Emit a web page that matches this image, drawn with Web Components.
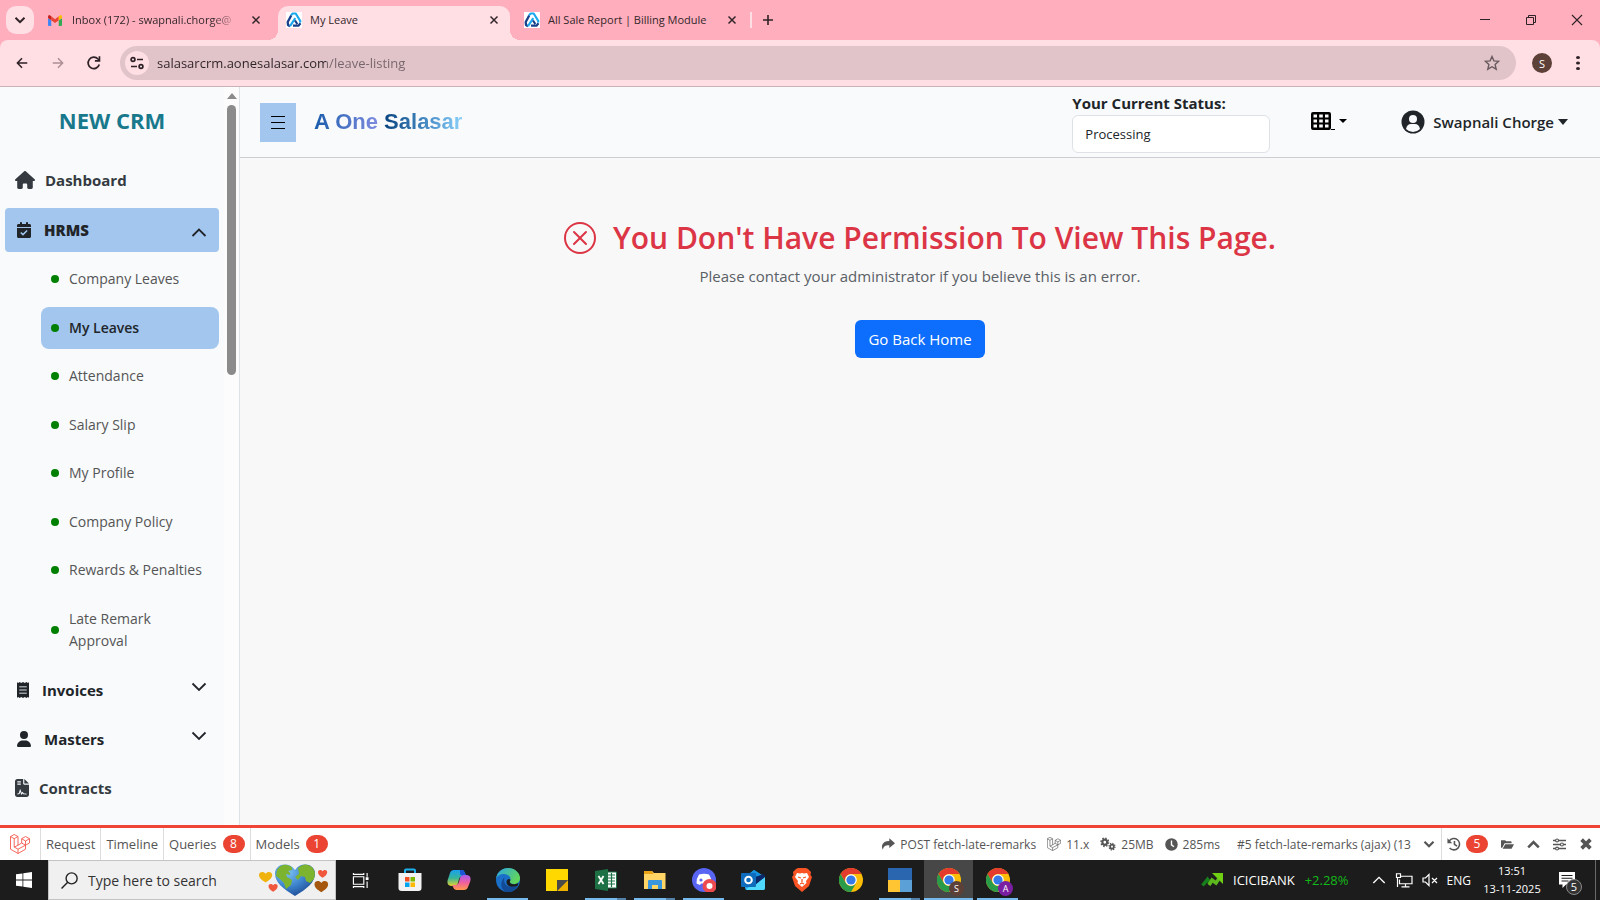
<!DOCTYPE html>
<html lang="en">
<head>
<meta charset="utf-8">
<title>My Leave</title>
<style>
html,body{height:100%}
body{margin:0;font-family:"Open Sans","Noto Sans",sans-serif;color:#212529;background:#f8f8f8;overflow:hidden}
</style>
</head>
<body>
<desk-top></desk-top>
<script>
const ICONS={
down:['0 0 16 16','<path d="M3.5 5.8 8 10.2l4.5-4.4" fill="none" stroke="currentColor" stroke-width="2"/>'],
gmail:['0 0 28 21','<path d="M0 6v13q0 2 2 2h4.500V10z" fill="#4285f4"/><path d="M28 6v13q0 2-2 2h-4.500V10z" fill="#34a853"/><path d="M6.500 2.500 14 8l7.500-5.500V10L14 15.500 6.500 10z" fill="#ea4335"/><path d="M0 3q0-3 3-3l3.500 2.500V10L0 5.500z" fill="#c5221f"/><path d="M28 3q0-3-3-3l-3.500 2.500V10L28 5.500z" fill="#fbbc04"/>'],
close:['0 0 16 16','<path d="m4 4 8 8m0-8-8 8" stroke="currentColor" stroke-width="1.700"/>'],
aone:['0 0 16 16','<path fill="#fff" d="M0 0h16v16H0z"/><path d="M5 3.200 6.700 1.500h3L14.300 9l-.3 1.500" fill="none" stroke="#1ba8ee" stroke-width="2.200" stroke-linejoin="round"/><path d="M5.200 3.500 1.700 10l.3 3 2 1.300" fill="none" stroke="#173f8a" stroke-width="2.300" stroke-linejoin="round"/><path d="M4 14.200 9.300 6.200" stroke="#1ba8ee" stroke-width="2.200"/><path d="m9 8.500 2.300 3.500M7 13.700h5.500l2-2.500" fill="none" stroke="#173f8a" stroke-width="2.200"/>'],
plus:['0 0 16 16','<path d="M8 3v10M3 8h10" stroke="currentColor" stroke-width="1.600"/>'],
min:['0 0 16 16','<path d="M3 7.500h10" stroke="currentColor"/>'],
restore:['0 0 16 16','<path d="M3.500 5.500h7v7h-7zM5.500 5.500v-2h7v7h-2" fill="none" stroke="currentColor"/>'],
wclose:['0 0 16 16','<path d="m3 3 10 10m0-10L3 13" stroke="currentColor" stroke-width="1.100"/>'],
back:['0 0 16 16','<path d="M14 8H3m5-5.500L2.700 8 8 13.500" fill="none" stroke="currentColor" stroke-width="1.700"/>'],
fwd:['0 0 16 16','<path d="M2 8h11M8 2.500 13.300 8 8 13.500" fill="none" stroke="currentColor" stroke-width="1.700"/>'],
reload:['0 0 16 16','<path d="M13.300 9.500A5.700 5.700 0 1 1 12 4L13.500 5.500" fill="none" stroke="currentColor" stroke-width="1.700"/><path d="M14.300 1.300v5.400H8.900V5h3.700V1.300z" fill="currentColor"/>'],
tune:['0 0 16 16','<g fill="none" stroke="currentColor" stroke-width="1.700"><circle cx="4" cy="4.500" r="1.900"/><path d="M8 4.500h6M2 11.500h6"/><circle cx="12" cy="11.500" r="1.900"/></g>'],
star:['0 0 16 16','<path d="m8 1.500 1.900 4.400 4.800.4-3.600 3.200 1.100 4.700L8 11.700l-4.200 2.500 1.100-4.700L1.300 6.300l4.800-.4z" fill="none" stroke="currentColor" stroke-width="1.400"/>'],
dots:['0 0 16 16','<g fill="currentColor"><circle cx="8" cy="2.500" r="1.600"/><circle cx="8" cy="8" r="1.600"/><circle cx="8" cy="13.500" r="1.600"/></g>'],
burger:['0 0 14 14','<path d="M0 1.500h14M0 7.500h14M0 13.500h14" stroke="currentColor"/>'],
table:['0 0 20 18','<path fill-rule="evenodd" d="M2 0h16q2 0 2 2v14q0 2-2 2H2q-2 0-2-2V2Q0 0 2 0zM2.500 2.500v3h3.500v-3zm5.700 0v3h3.600v-3zm5.800 0v3h3.500v-3zM2.500 7.500v3h3.500v-3zm5.700 0v3h3.600v-3zm5.800 0v3h3.500v-3zM2.500 12.500v3h3.500v-3zm5.700 0v3h3.600v-3zm5.800 0v3h3.500v-3z" fill="currentColor"/>'],
caret:['0 0 8 4','<path d="M0 0h8L4 4z" fill="currentColor"/>'],
user:['0 0 24 24','<circle cx="12" cy="12" r="11.500" fill="currentColor"/><circle cx="12" cy="9" r="4" fill="#f8fafc"/><path d="M5 19q1-5 5-5h4q4 0 5 5-3 3-7 3t-7-3z" fill="#f8fafc"/>'],
home:['0 0 576 512','<path fill="currentColor" d="M575.8 255.5c0 18-15 32.1-32 32.1h-32l.7 160.2c0 2.700-.2 5.400-.5 8.100V472c0 22.100-17.900 40-40 40H392c-22.100 0-40-17.900-40-40V384c0-17.700-14.300-32-32-32H256c-17.700 0-32 14.300-32 32v88c0 22.100-17.900 40-40 40H104c-22.100 0-40-17.900-40-40V287.600H32c-18 0-32-14-32-32.100 0-9 3-17 10-24L266.400 8c7-7 15-8 22-8s15 2 21 7L564.800 231.500c8 7 12 15 11 24z"/>'],
calendar:['0 0 448 512','<path fill="currentColor" fill-rule="evenodd" d="M128 0c18 0 32 14 32 32v32h128V32c0-18 14-32 32-32s32 14 32 32v32h48c27 0 48 21 48 48v48H0v-48c0-27 21-48 48-48h48V32c0-18 14-32 32-32zM0 192h448v272c0 27-21 48-48 48H48c-27 0-48-21-48-48zm340 98-34-34-114 114-54-54-34 34 88 88z"/>'],
receipt:['0 0 384 512','<path fill="currentColor" d="M0 8 40 30 80 0l56 34L192 0l56 34L304 0l40 30 40-22v496l-40-22-40 30-56-34-56 34-56-34-56 34-40-30-40 22z"/><path d="M72 152h240M72 256h240M72 360h240" stroke="#9aa0a6" stroke-width="48"/>'],
person:['0 0 448 512','<path fill="currentColor" d="M224 256A128 128 0 1 0 224 0a128 128 0 1 0 0 256zm-45.700 48C79.800 304 0 383.800 0 482.300 0 498.700 13.300 512 29.700 512H418.300c16.400 0 29.700-13.300 29.700-29.700C448 383.800 368.200 304 269.700 304z"/>'],
contract:['0 0 384 512','<path fill="currentColor" fill-rule="evenodd" d="M64 0C29 0 0 29 0 64v384c0 35 29 64 64 64h256c35 0 64-29 64-64V160H256c-18 0-32-14-32-32V0zm192 0v128h128zM64 64h96v32H64zm0 64h96v32H64z"/><path d="m64 430 50-16 28-90 36 100 30-38 24 36 88 8" fill="none" stroke="#f8fafc" stroke-width="28"/>'],
chevd:['0 0 16 16','<path d="m1.500 1.500 6.500 6.500 6.500-6.500" fill="none" stroke="currentColor" stroke-width="1.800"/>'],
chevu:['0 0 16 16','<path d="m1.500 14 6.500-6.500 6.500 6.500" fill="none" stroke="currentColor" stroke-width="1.800"/>'],
chevtray:['0 0 16 16','<path d="m1.500 11.500 6.500-6.500 6.500 6.500" fill="none" stroke="currentColor" stroke-width="1.600"/>'],
xcircle:['0 0 16 16','<path fill="currentColor" d="M8 15A7 7 0 1 1 8 1a7 7 0 0 1 0 14m0 1A8 8 0 1 0 8 0a8 8 0 0 0 0 16"/><path fill="currentColor" d="M4.646 4.646a.5.5 0 0 1 .708 0L8 7.293l2.646-2.647a.5.5 0 0 1 .708.708L8.707 8l2.647 2.646a.5.5 0 0 1-.708.708L8 8.707l-2.646 2.647a.5.5 0 0 1-.708-.708L7.293 8 4.646 5.354a.5.5 0 0 1 0-.708"/>'],
laravel:['0 0 20 20','<g fill="none" stroke="currentColor" stroke-width=".9" stroke-linejoin="round"><path d="m.5 2.500 3.700-2 3.800 2-3.800 2.200zM.5 2.500v12.700L8 19.500v-4.300l-3.800-2.200V4.700M8 2.500v8.700l-3.800 2M8 11.200l3.700-2.200V4.700l3.800-2.200 4 2.200-4 2.300-3.800-2.300M15.500 7v4.200l4-2.200V4.700M11.700 9l3.800 2.200v4L8 19.500M8 15.200l7.500-4"/></g>'],
share:['0 0 16 16','<path fill="currentColor" d="M9.500 1.500 16 7l-6.500 5.500V9.300C5 9.200 3 10 2.200 14.500.2 12 .2 4.800 9.500 4.700z"/>'],
cogs:['0 0 20 16','<g fill="none" stroke="currentColor"><circle cx="6" cy="6" r="3" stroke-width="2.600"/><circle cx="6" cy="6" r="4.700" stroke-width="1.800" stroke-dasharray="1.850 1.840"/><circle cx="15" cy="11" r="2.300" stroke-width="2.200"/><circle cx="15" cy="11" r="3.800" stroke-width="1.400" stroke-dasharray="1.500 1.480"/></g>'],
clock:['0 0 16 16','<circle cx="8" cy="8" r="7.700" fill="currentColor"/><path d="M8 3v5.500l3 2.200" fill="none" stroke="#fff" stroke-width="1.700"/>'],
bold:['0 0 16 16','<path d="m2 5 6 6 6-6" fill="none" stroke="currentColor" stroke-width="3"/>'],
boldup:['0 0 16 16','<path d="m1.500 11.500 6.500-6.500 6.500 6.500" fill="none" stroke="currentColor" stroke-width="3.200"/>'],
history:['0 0 16 16','<path d="M2.500 4.500A6.500 6.500 0 1 1 3 12.500M8.500 4.500v4l3 2" fill="none" stroke="currentColor" stroke-width="1.800"/><path d="M.5 1.500V7H6z" fill="currentColor"/>'],
folderopen:['0 0 16 14','<path fill="currentColor" d="M0 1.500h5L6.500 3H12q1 0 1 1v1.500H4.500L1.500 11H0zM5.200 6.700H16L13 12.500H2z"/>'],
sliders:['0 0 16 16','<path d="M0 3h16M0 8h16M0 13h16" stroke="currentColor" stroke-width="1.700"/><g fill="#fff" stroke="currentColor" stroke-width="1.400"><circle cx="5" cy="3" r="1.800"/><circle cx="11" cy="8" r="1.800"/><circle cx="5" cy="13" r="1.800"/></g>'],
heavyx:['0 0 16 16','<path d="m3 3 10 10m0-10L3 13" stroke="currentColor" stroke-width="4.200"/>'],
win:['0 0 16 16','<path fill="#fff" d="m0 2.300 6.500-.9v6.200H0zM7.300 1.300 16 0v7.600H7.300zM0 8.400h6.500v6.200L0 13.700zM7.300 8.400H16V16l-8.700-1.200z"/>'],
search:['0 0 16 16','<circle cx="10" cy="6" r="5.200" fill="none" stroke="currentColor" stroke-width="1.300"/><path d="M6.300 9.700.5 15.500" stroke="currentColor" stroke-width="1.400"/>'],
hearts:['0 0 70 34','<defs><radialGradient id="b" cx=".3" cy=".25" r=".9"><stop offset="0" stop-color="#7fc4f5"/><stop offset=".5" stop-color="#3d83cd"/><stop offset="1" stop-color="#163d86"/></radialGradient><path id="h" d="M20 35C8 27 0 20 0 10 0-1 14-4 20 6 26-4 40-1 40 10 40 20 32 27 20 35z"/></defs><use href="#h" fill="url(#b)" transform="translate(16 1.500) scale(1 .9)"/><path d="M18 7q4-6 10-5 6 1 5 5l-4 1q3 2 2 4l-4-1 1 3 5 3-1 5-5 4-2-6-4-4-4-3zM39 5q5-5 10-3 5 1 7 8l-1 6-4 4-4-2-1-4-4-1-3 4-3-3 4-3z" fill="#7cb32f"/><use href="#h" fill="#efb20e" transform="translate(0 9) scale(.33 .3)"/><use href="#h" fill="#f0583e" transform="translate(9.500 21) scale(.23 .22)"/><use href="#h" fill="#f0583e" transform="translate(59 7) scale(.23 .22)"/><use href="#h" fill="#a5560f" transform="translate(55.500 18) scale(.34 .32)"/>'],
taskview:['0 0 18 18','<path d="M1.500 5v8h11V5zM1.500 1v1.500h11V1M1.500 17v-1.500h11V17M16 1v4m0 5v7" fill="none" stroke="#fff" stroke-width="1.200"/><path d="M14.500 5.500h3v3h-3z" fill="#fff"/>'],
store:['0 0 24 24','<path d="M7 6V2.500q0-1 1-1h8q1 0 1 1V6" fill="none" stroke="#1db2ee" stroke-width="2"/><path d="M.5 5h23v15q0 3-3 3h-17q-3 0-3-3z" fill="#f2f2f2"/><path fill="#f25022" d="M7 9h4.500v4.500H7z"/><path fill="#7fba00" d="M12.500 9H17v4.500h-4.500z"/><path fill="#00a4ef" d="M7 14.500h4.500V19H7z"/><path fill="#ffb900" d="M12.500 14.500H17V19h-4.500z"/>'],
copilot:['0 0 24 24','<defs><linearGradient id="c1" x2="0" y2="1"><stop stop-color="#1aa0f0"/><stop offset=".5" stop-color="#36b59b"/><stop offset="1" stop-color="#e5d32d"/></linearGradient><linearGradient id="c2" x2="0" y2="1"><stop stop-color="#a85bf0"/><stop offset=".5" stop-color="#ee5fa0"/><stop offset="1" stop-color="#ff9a4a"/></linearGradient></defs><path d="M7 2h8q2 0 3 3l1 3h-3q-3 0-4 3l-1 4q-1 3-4 3H4q-5-1-3-7l2-6q1-3 4-3z" fill="url(#c1)"/><path d="M13 2h2q2 0 3 3l1 3h-3q-2 0-3-2z" fill="#1d55d8"/><path d="M17 22H9q-2 0-3-3l-1-2h3q3 0 4-3l1-4q1-3 4-3h3q5 1 3 7l-2 5q-1 3-4 3z" fill="url(#c2)"/>'],
edge:['0 0 24 24','<defs><linearGradient id="e" x2="1" y2=".5"><stop stop-color="#2aa6e8"/><stop offset="1" stop-color="#62d65a"/></linearGradient></defs><circle cx="12" cy="12" r="12" fill="#1a6fc8"/><path d="M0 11C1 4 6 0 12 0c7 0 12 5 12 10 0 4-3 6-6 6-4 0-5-2-3.500-4C15 8 11 6 8 6 4 6 1 8 0 11z" fill="url(#e)"/><path d="M8.500 9c-2 7 3 12 13 9-2 4-6 6-9.500 6C5 24 3 15 8.500 9z" fill="#124a96"/><path d="M14.500 12c-2 3 1 5 5 4l3-1-1 3c-6 2-11 0-11-4 0-3 3-4 4-2z" fill="#1c1c1c"/>'],
sticky:['0 0 22 22','<path d="M0 0h22v11L11 22H0z" fill="#ffd800"/><path d="M11 22V11h11z" fill="#4c4a48"/><path d="M11 22h11V11z" fill="#f0b000"/><path d="M11 22V11h11z" fill="#4c4a48"/>'],
excel:['0 0 22 22','<path d="M11 3h10.500v16H11z" fill="#fff" stroke="#1e7145"/><path d="M13 6h7M13 9h7M13 12h7M13 15h7M16.500 4v14" stroke="#1e7145" stroke-width="1.200"/><path d="M0 2 13 0v22L0 20z" fill="#1e7145"/><path d="m3.500 7 5 8m0-8-5 8" stroke="#fff" stroke-width="1.800"/>'],
folder:['0 0 22 22','<path d="M0 2h8l2 2h11.500v16H0z" fill="#ffd566"/><path d="M0 2h8l1.500 3H0z" fill="#e8a317"/><path d="M4 20v-8q0-1 1-1h12q1 0 1 1v8h-4v-4H8v4z" fill="#3a96dd"/>'],
discord:['0 0 24 24','<circle cx="12" cy="12" r="12" fill="#5865f2"/><path d="M7 6.500q5-1.500 10 0 3 5 2.500 9L16 17l-1-1.500H9L8 17l-3.500-1.500Q4 11 7 6.500z" fill="#fff"/><circle cx="9" cy="12" r="1.600" fill="#5865f2"/><circle cx="17.500" cy="18" r="7" fill="#ed4a50"/><circle cx="17.500" cy="18" r="3" fill="#fff"/>'],
outlook:['0 0 24 24','<path d="m4 9 9-7 11 7v11q0 2-2 2H6q-2 0-2-2z" fill="#28a8ea"/><path d="m7 7 6-5 10 7-14 9z" fill="#1490df"/><path d="M24 9v11q0 2-2 2H6l-1-1z" fill="#50d9ff"/><path d="m14 9 9-3 1 3-10 8z" fill="#0a2767"/><rect y="5" width="15" height="14" rx="1" fill="#0f6cbd"/><circle cx="7.500" cy="12" r="3.300" fill="none" stroke="#fff" stroke-width="2"/>'],
brave:['0 0 20 24','<path d="m4 1 2-1h8l2 1 3 3-.5 3L20 9l-3 9-7 6-7-6L0 9l1.500-2L1 4z" fill="#fb5424"/><path d="m5 5 3 .5L10 5l2 .5 3-.5 2 4-3 4 .5 2-4.500 4-4.500-4 .5-2-3-4z" fill="#fff"/><path d="m6 9 3 1m5-1-3 1m-1 1v3m-2 2 2-1 2 1" stroke="#fb5424" stroke-width="1.300" fill="none"/>'],
chrome:['0 0 24 24','<circle cx="12" cy="12" r="12" fill="#fbbd06"/><path d="M1.600 6A12 12 0 0 1 22.400 6H12a6 6 0 0 0-5.200 9z" fill="#e33b2e"/><path d="M1.600 6A12 12 0 0 0 12 24l5.200-9a6 6 0 0 1-10.400 0z" fill="#2a9b48"/><circle cx="12" cy="12" r="5.800" fill="#fff"/><circle cx="12" cy="12" r="4.600" fill="#357ae8"/>'],
blocks:['0 0 24 24','<path fill="#2a65b0" d="M0 0h24v12H0z"/><path fill="#ffc533" d="M0 12h12v12H0z"/><path fill="#5ca0d8" d="M12 12h12v12H12z"/>'],
stock:['0 0 22 14','<path d="m1.500 12.500 5-6 3.500 5" fill="none" stroke="#16801c" stroke-width="3.500"/><path d="m8 12 3-5 4 3 4-6" fill="none" stroke="#5cb81c" stroke-width="3.500"/><path d="M11 0h11v11z" fill="#6fcf12"/>'],
net:['0 0 18 16','<path d="M6 3.500h11v8H4.500V7M10.500 11.500V15M6.500 14.800h8M1.500.8h4v4h-4zM2.500 5v10" fill="none" stroke="#fff" stroke-width="1.200"/>'],
mute:['0 0 16 14','<path d="M1 5v4h2.500L7 12.500v-11L3.500 5zM10 5l5 5m0-5-5 5" fill="none" stroke="#fff" stroke-width="1.200"/>'],
notif:['0 0 16 16','<path d="M0 0h16v12.500H7L3.500 16v-3.500H0z" fill="#fff"/><path d="M2.500 3.500h11M2.500 6.300h11M2.500 9h7" stroke="#1c1c1c" stroke-width="1.100"/>'],
thumb:['0 0 10 6','<path d="M0 6 5 0l5 6z" fill="currentColor"/>']
};
const RESET=`*{box-sizing:border-box}button,input,select{font:inherit;color:inherit;margin:0;padding:0;border:0;background:none;outline:0}a{color:inherit;text-decoration:none}button{display:flex;align-items:center;justify-content:center}`;
function define(name,css,html){
  customElements.define(name,class extends HTMLElement{
    constructor(){super();this.attachShadow({mode:'open'})}
    connectedCallback(){
      const body=typeof html==='function'?html(this):html;
      this.shadowRoot.innerHTML=`<style>${RESET}${css}</style>${body}`;
    }
  });
}
const ic=(n,w,h=w)=>`<ui-icon name="${n}" w="${w}" h="${h}"></ui-icon>`;

define('ui-icon',':host{display:block;flex:none;line-height:0}svg{display:block}',e=>{
  const [vb,body]=ICONS[e.getAttribute('name')];
  return `<svg width="${e.getAttribute('w')}" height="${e.getAttribute('h')}" viewBox="${vb}" preserveAspectRatio="none" aria-hidden="true">${body}</svg>`;
});

define('browser-tab',`
:host{display:flex;flex:0 0 232px;height:34px;align-items:center;gap:8px;padding:0 8px 6px;font-size:11px;color:#33262a}
:host([fade]){gap:10px}
:host([active]){background:#ffdee4;border-radius:10px 10px 0 0;position:relative;margin:0 6px}
:host([active])::before,:host([active])::after{content:"";position:absolute;bottom:0;width:10px;height:10px}
:host([active])::before{left:-10px;background:radial-gradient(circle at 0 0,#ffaebd 10px,#ffdee4 10px)}
:host([active])::after{right:-10px;background:radial-gradient(circle at 100% 0,#ffaebd 10px,#ffdee4 10px)}
a{flex:1;min-width:0;overflow:hidden;white-space:nowrap;line-height:18px}
:host([fade]) a{-webkit-mask-image:linear-gradient(to right,#000 140px,#0004 160px)}
button{width:16px;height:16px}`,
e=>`${ic(e.getAttribute('icon'),e.hasAttribute('fade')?14:16,e.hasAttribute('fade')?11:16)}<a href="#"><slot></slot></a><button aria-label="Close tab">${ic('close',14)}</button>`);

define('browser-chrome',`
:host{display:block;background:#ffaebd;color:#2d2226}
.tabs{display:flex;height:40px;padding:6px 0 0 6px}
.list{width:28px;height:28px;border-radius:10px;background:#ffdee4}
.first{margin-left:6px}
.sep{width:2px;height:16px;background:#ffdee4;margin:6px 0 0 2px}
.add{width:28px;height:28px;margin-left:2px}
.wins{margin-left:auto;display:flex}
.wins button{width:46px;height:28px}
.bar{display:flex;align-items:center;height:47px;background:#ffdee4;border-bottom:1px solid #cbb2b8;border-radius:8px 8px 0 0;padding:0 12px 0 4px}
.nav{width:36px;height:34px}
.fwd{color:#ad8f97}
.omni{flex:1;display:flex;align-items:center;height:34px;border-radius:17px;background:#e0c4c9;margin:0 16px 0 8px;padding:0 16px 0 5px}
.chip{width:24px;height:24px;border-radius:50%;background:#ffdee4;margin-right:8px}
input{flex:1;min-width:0;font-size:13px;height:24px;background:linear-gradient(to right,#2d2226 169px,#75646a 169px);-webkit-background-clip:text;background-clip:text;color:transparent;caret-color:#222}
.star{color:#6b5b60}
.me{width:20px;height:20px;border-radius:50%;background:#5d4037;color:#fff;font-size:11px;margin-right:16px}
`,`
<div class="tabs"><button class="list" aria-label="Search tabs">${ic('down',16)}</button>
<browser-tab class="first" icon="gmail" fade>Inbox (172) - swapnali.chorge@</browser-tab>
<browser-tab icon="aone" active>My Leave</browser-tab>
<browser-tab icon="aone">All Sale Report | Billing Module</browser-tab>
<div class="sep"></div><button class="add" aria-label="New tab">${ic('plus',16)}</button>
<div class="wins"><button aria-label="Minimize">${ic('min',16)}</button><button aria-label="Restore">${ic('restore',16)}</button><button aria-label="Close">${ic('wclose',16)}</button></div></div>
<div class="bar"><button class="nav" aria-label="Back">${ic('back',14)}</button><button class="nav fwd" aria-label="Forward">${ic('fwd',14)}</button><button class="nav" aria-label="Reload">${ic('reload',16)}</button>
<div class="omni"><button class="chip" aria-label="Site information">${ic('tune',16)}</button><input aria-label="Address" value="salasarcrm.aonesalasar.com/leave-listing"><button class="star" aria-label="Bookmark">${ic('star',16)}</button></div>
<button class="me" aria-label="Profile">S</button><button aria-label="Menu">${ic('dots',20,16)}</button></div>`);

define('nav-item',`
:host{display:block;font-size:15px;font-weight:700;color:#212529}
a{display:flex;align-items:center;height:44px;padding:0 12px;border-radius:4px}
:host([active]){font-weight:800}
:host([active]) a{background:#a2c6ee}
:host([soft]){color:#343a40}
:host([soft]) a{padding-left:10px}
.t{flex:1;margin-left:var(--gap,13px);line-height:24px}`,
e=>{const [n,w,h]=e.getAttribute('icon').split(' ');return `<a href="#">${ic(n,w,h)}<span class="t"><slot></slot></span>${e.hasAttribute('chev')?ic(e.getAttribute('chev'),16):''}</a>`});

define('sub-item',`
:host{display:block;font-size:14px;color:#555}
a{display:flex;align-items:center;gap:10px;min-height:42px;padding:10px;border-radius:8px;line-height:22px}
:host([active]) a{background:#a2c6ee;color:#212529}
:host([active]){font-weight:600}
i{flex:none;width:8px;height:8px;border-radius:50%;background:green}`,
`<a href="#"><i></i><span><slot></slot></span></a>`);

define('side-bar',`
:host{display:flex;width:240px;flex:none;background:#f8fafc;border-right:1px solid #dee2e6;overflow:hidden}
.list{flex:1;min-width:0;padding:0 5px}
h1{margin:15px 0 20px;text-align:center;font-size:22px;line-height:36px;font-weight:700;color:#18788c}
nav{display:flex;flex-direction:column;gap:5px}
.top{margin-bottom:1px}
.sub{display:flex;flex-direction:column;justify-content:space-between;height:404px;margin:1px 0 1px 36px}
.track{width:15px;background:#fcfcfc;display:flex;flex-direction:column;align-items:center;gap:6px;padding-top:6px;color:#8b8b8b}
.thumb{width:9px;height:270px;border-radius:5px;background:#8b8b8b}
`,`
<div class="list"><h1>NEW CRM</h1><nav>
<nav-item class="top" soft icon="home 20 18" style="--gap:10px">Dashboard</nav-item>
<nav-item active icon="calendar 14 16" chev="chevu">HRMS</nav-item>
<div class="sub"><sub-item>Company Leaves</sub-item><sub-item active>My Leaves</sub-item><sub-item>Attendance</sub-item><sub-item>Salary Slip</sub-item><sub-item>My Profile</sub-item><sub-item>Company Policy</sub-item><sub-item>Rewards &amp; Penalties</sub-item><sub-item>Late Remark<br>Approval</sub-item></div>
<nav-item icon="receipt 12 16" chev="chevd">Invoices</nav-item>
<nav-item icon="person 14 16" chev="chevd">Masters</nav-item>
<nav-item soft icon="contract 14 18" style="--gap:10px">Contracts</nav-item>
</nav></div><div class="track">${ic('thumb',10,6)}<div class="thumb"></div></div>`);

define('top-nav',`
:host{display:flex;align-items:center;height:71px;background:#f8fafc;border-bottom:1px solid #cbcdd0;padding:0 32px 0 20px}
.menu{width:36px;height:39px;background:#a2c6ee;color:#000}
.brand{margin-left:18px;font:700 22px/28px "Liberation Sans",Arial,sans-serif}
.brand span{background:linear-gradient(to right,#1a5cab,#7d8be0);-webkit-background-clip:text;background-clip:text;color:transparent}
.brand span+span{background-image:linear-gradient(to right,#08447f,#4d92cc 60%,#8ad0fa)}
.status{margin-left:auto;width:198px;display:grid}
label{font-size:15px;font-weight:700;line-height:24px}
input{height:38px;border:1px solid #dee2e6;border-radius:6px;background:#fff;padding:0 12px;font-size:13px;width:100%}
.grid{margin-left:41px;padding-bottom:2px;color:#000;gap:4px}
.grid span{display:flex;align-items:flex-end}
.grid u{width:4px;height:1px;background:#000}
.user{margin-left:54px;gap:8px;font-size:15px;font-weight:600}
.user span{display:flex;align-items:center;gap:4px}
`,`<button class="menu" aria-label="Toggle menu">${ic('burger',14)}</button>
<a class="brand" href="#"><span>A One</span> <span>Salasar</span></a>
<div class="status"><label for="s">Your Current Status:</label><input id="s" value="Processing"></div>
<button class="grid" aria-label="Apps"><span>${ic('table',20,18)}<u></u></span>${ic('caret',8,4)}</button>
<button class="user">${ic('user',24)}<span>Swapnali Chorge ${ic('caret',10,6)}</span></button>`);

define('permission-message',`
:host{display:flex;flex-direction:column;align-items:center;padding-top:60px}
h2{display:flex;align-items:center;gap:17px;margin:0;font-size:30px;line-height:40px;font-weight:600;color:#dc3545}
p{margin:6px 0 32px;font-size:15px;line-height:24px;color:#5a6066}
a{background:#0d6efd;color:#fff;border-radius:6px;padding:7px 13px;font-size:15px;line-height:24px}
`,`<h2>${ic('xcircle',32)}<span><slot name="title"></slot></span></h2><p><slot></slot></p><a href="#">Go Back Home</a>`);

define('debug-bar',`
:host{display:flex;align-items:center;height:35px;background:#fff;border-top:3px solid #f04436;font-size:13px;color:#555}
.logo{width:40px;color:#f4584c;display:flex;justify-content:center}
.tab{display:flex;align-items:center;gap:6px;height:32px;border-left:1px solid #ddd;padding:0 5px}
b{font-weight:400;background:#eb4432;color:#fff;border-radius:9px;height:18px;line-height:18px;min-width:22px;text-align:center;font-size:12px}
.info{display:flex;align-items:center;gap:5px;margin-right:11px;font-size:12px}
.first{margin-left:auto}
.sel{display:flex;align-items:center;gap:6px;margin:0 6px;font-size:12px}
select{appearance:none;width:180px}
.tools{display:flex;align-items:center;height:32px;border-left:1px solid #ddd;padding:0 7px 0 5px}
.tools button{gap:5px}
.tools button+button{margin-left:13px}
`,`<a class="logo" href="#" aria-label="Laravel">${ic('laravel',20)}</a>
<a class="tab" href="#">Request</a><a class="tab" href="#">Timeline</a><a class="tab" href="#">Queries <b>8</b></a><a class="tab" href="#">Models <b>1</b></a>
<span class="info first">${ic('share',14)}POST fetch-late-remarks</span><span class="info">${ic('laravel',14)}11.x</span><span class="info">${ic('cogs',16,14)}25MB</span><span class="info">${ic('clock',13)}285ms</span>
<span class="sel"><select aria-label="Request"><option>#5 fetch-late-remarks (ajax) (13</option></select>${ic('bold',12)}</span>
<div class="tools"><button aria-label="History">${ic('history',14)}<b>5</b></button><button aria-label="Open">${ic('folderopen',13,11)}</button><button aria-label="Collapse">${ic('boldup',13)}</button><button aria-label="Settings">${ic('sliders',13)}</button><button aria-label="Close">${ic('heavyx',14)}</button></div>`);

define('task-app',`
:host{display:block;width:49px;height:40px}
button{width:100%;height:100%;position:relative}
:host([run]) button::after{content:"";position:absolute;left:4px;right:4px;bottom:0;height:2px;background:#76b9ed}
:host([run=multi]) button::after{background:linear-gradient(to right,#76b9ed 32px,#5482a8 32px)}
:host([active]) button{background:#474747}
:host([active]) button::after{left:0;right:0}
span{position:absolute;left:25px;top:21px;width:15px;height:15px;border-radius:50%;background:var(--c);color:#fff;font-size:9px;line-height:15px;text-align:center}`,
e=>{const s=e.getAttribute('size')||24;return `<button aria-label="${e.getAttribute('label')}">${ic(e.getAttribute('icon'),e.getAttribute('w')||s,s)}${e.hasAttribute('badge')?`<span style="--c:${e.getAttribute('color')}">${e.getAttribute('badge')}</span>`:''}</button>`});

define('task-bar',`
:host{display:flex;align-items:center;height:40px;background:#1c1c1c;color:#fff;font-size:13px}
.start{width:48px;height:40px}
.search{display:flex;align-items:center;width:288px;height:40px;background:#f0f0f0;border:1px solid #c4c4c4;color:#222;padding:0 6px 0 12px}
input{flex:1;min-width:0;margin-left:10px;font-size:14px}
input::placeholder{color:#333;opacity:1}
.apps{display:flex}
.stock{margin-left:auto;gap:10px}
.green{color:#13b918}
button{white-space:nowrap}
.tray{display:flex;align-items:center;margin-left:14px;font-size:12px}
.tray button{margin-left:9px}
.time{display:block;width:80px;margin:0 5px 0 1px;font-size:11px;line-height:18px;text-align:center}
.time span{display:block}
.note{position:relative;width:38px;height:40px;padding-right:18px}
.note span{position:absolute;left:9px;top:19px;width:16px;height:16px;border:1px solid #8a8a8a;border-radius:50%;background:#333;font-size:11px;line-height:14px;text-align:center}
.peek{width:5px;height:40px;border-left:1px solid #6a6a6a}
`,`<button class="start" aria-label="Start">${ic('win',16)}</button>
<label class="search">${ic('search',17)}<input aria-label="Search" placeholder="Type here to search">${ic('hearts',70,34)}</label>
<div class="apps"><task-app icon="taskview" size="17" label="Task view"></task-app><task-app icon="store" label="Store"></task-app><task-app icon="copilot" label="Copilot"></task-app><task-app icon="edge" label="Edge" run></task-app><task-app icon="sticky" size="22" label="Sticky Notes"></task-app><task-app icon="excel" size="22" label="Excel" run="multi"></task-app><task-app icon="folder" size="22" label="Files" run="multi"></task-app><task-app icon="discord" label="Discord" run></task-app><task-app icon="outlook" label="Outlook"></task-app><task-app icon="brave" w="20" label="Brave"></task-app><task-app icon="chrome" label="Chrome"></task-app><task-app icon="blocks" label="Blocks" run="multi"></task-app><task-app icon="chrome" label="Chrome S" run active badge="S" color="#5d4037"></task-app><task-app icon="chrome" label="Chrome A" run badge="A" color="#7b1fa2"></task-app></div>
<button class="stock">${ic('stock',22,14)}<span>ICICIBANK</span><span class="green">+2.28%</span></button>
<div class="tray"><button aria-label="Hidden icons">${ic('chevtray',14)}</button><button aria-label="Network">${ic('net',18,15)}</button><button aria-label="Volume">${ic('mute',16,14)}</button><button>ENG</button></div>
<button class="time"><span>13:51</span><span>13-11-2025</span></button>
<button class="note" aria-label="Notifications">${ic('notif',16)}<span>5</span></button><div class="peek"></div>`);

define('desk-top',`
:host{display:flex;flex-direction:column;height:100vh}
.page{flex:1;min-height:0;display:flex}
main{flex:1;min-width:0;background:#f8f8f8}
`,`<browser-chrome></browser-chrome>
<div class="page"><side-bar></side-bar><main><top-nav></top-nav><permission-message><span slot="title">You Don't Have Permission To View This Page.</span>Please contact your administrator if you believe this is an error.</permission-message></main></div>
<debug-bar></debug-bar><task-bar></task-bar>`);
</script>
</body>
</html>
